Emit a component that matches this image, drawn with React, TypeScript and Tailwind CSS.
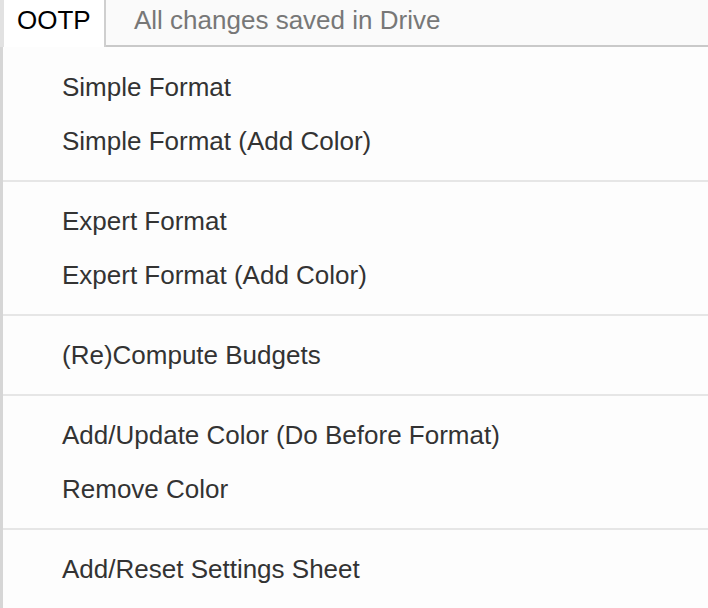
export default function App() {
  const groups: string[][] = [
    ["Simple Format", "Simple Format (Add Color)"],
    ["Expert Format", "Expert Format (Add Color)"],
    ["(Re)Compute Budgets"],
    ["Add/Update Color (Do Before Format)", "Remove Color"],
    ["Add/Reset Settings Sheet"],
  ];

  return (
    <div className="w-[708px] h-[608px] bg-white flex flex-col overflow-hidden font-['Liberation_Sans',Arial,sans-serif] text-[26px]">
      {/* Top bar */}
      <div className="flex h-[47px] shrink-0">
        <div className="w-[4px] bg-[#e2e2e2]" />
        <div className="w-[102px] pl-[13px] bg-white border-r-2 border-[#cfcfcf] text-black flex items-center pb-[6px]">
          OOTP
        </div>
        <div className="flex-1 bg-[#fafafa] border-b-2 border-[#c9c9c9] pl-[28px] text-[#777] flex items-center pb-[4px]">
          All changes saved in Drive
        </div>
      </div>

      {/* Menu */}
      <div className="flex-1 border-l-[3px] border-[#d6d6d6] bg-[#fdfdfd] pt-[13px]">
        {groups.map((items, gi) => (
          <div key={gi}>
            {gi > 0 && <div className="h-[2px] bg-[#e6e6e6] my-[12px]" />}
            {items.map((label) => (
              <div key={label} className="h-[54px] pl-[59px] flex items-center text-[#333]">
                {label}
              </div>
            ))}
          </div>
        ))}
      </div>
    </div>
  );
}
